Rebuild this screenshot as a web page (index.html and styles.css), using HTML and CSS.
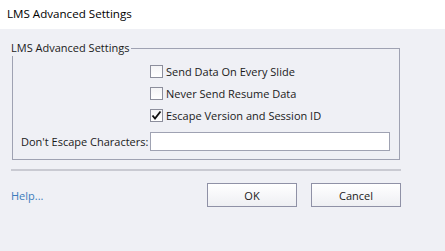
FILE: index.html
```html
<!DOCTYPE html>
<html lang="en">
<head>
  <meta charset="UTF-8">
  <title>LMS Advanced Settings</title>
  <link rel="stylesheet" href="styles.css">
</head>
<body>
  <div class="titlebar">LMS Advanced Settings</div>
  <div class="dialog">
    <fieldset class="group">
      <legend>LMS Advanced Settings</legend>
      <div class="grid">
        <label class="check">
          <span class="box"></span>
          <span>Send Data On Every Slide</span>
        </label>
        <label class="check">
          <span class="box"></span>
          <span>Never Send Resume Data</span>
        </label>
        <label class="check">
          <span class="box">
            <svg width="11" height="11" viewBox="0 0 11 11">
              <path d="M1.5 5.5 L4 8.5 L9.5 1.5" fill="none" stroke="#111" stroke-width="1.9"/>
            </svg>
          </span>
          <span>Escape Version and Session ID</span>
        </label>
        <span class="field-label">Don't Escape Characters:</span>
        <input class="field" type="text">
      </div>
    </fieldset>
    <div class="separator"></div>
    <div class="footer">
      <a class="help" href="#">Help...</a>
      <div class="buttons">
        <button>OK</button>
        <button>Cancel</button>
      </div>
    </div>
  </div>
</body>
</html>
```

FILE: styles.css
```css
body {
  margin: 0;
  padding: 0;
  font-family: "Open Sans", Arial, sans-serif;
  font-size: 11px;
  color: #1a1a1a;
  background-color: #eff0f5;
  height: 251px;
  overflow: hidden;
}
.titlebar {
  height: 29px;
  line-height: 28px;
  padding-left: 7px;
  background-color: #fff;
  font-size: 11.6px;
  color: #000;
}
.dialog {
  width: 390px;
  padding-left: 11px;
  padding-top: 11px;
}
.group {
  margin: 0 0 0 1px;
  width: 388px;
  box-sizing: border-box;
  border: 1px solid #9fa2b2;
  padding: 4px 8px 8px 8px;
}
.group legend {
  padding: 0 2px 0 0;
  margin-left: -10px;
  line-height: 16px;
  color: #1a1a1a;
}
.grid {
  display: grid;
  grid-template-columns: 129px 240px;
  align-items: center;
}
.check {
  grid-column: 2;
  display: flex;
  align-items: center;
  gap: 3px;
  height: 22px;
}
.box {
  width: 11px;
  height: 11px;
  border: 1px solid #8c8e9c;
  background: linear-gradient(#f4f4f6, #ffffff);
  display: flex;
  align-items: center;
  justify-content: center;
}
.field-label {
  grid-column: 1;
  margin-top: 6px;
}
.field {
  grid-column: 2;
  margin-top: 6px;
  height: 19px;
  box-sizing: border-box;
  border: 1px solid #9fa2b2;
  background: #fff;
  padding: 0 3px;
}
.separator {
  margin-top: 9px;
  height: 2px;
  background-color: #c9cad2;
}
.footer {
  display: flex;
  align-items: center;
  justify-content: space-between;
  margin-top: 12px;
}
.help {
  color: #3c7cbc;
  text-decoration: none;
}
.buttons {
  display: flex;
  gap: 14px;
}
.buttons button {
  width: 90px;
  height: 24px;
  font-family: inherit;
  font-size: 11px;
  color: #1a1a1a;
  border: 1px solid #8f91a6;
  background: linear-gradient(#ffffff, #eeeff3);
  padding: 0;
}
```
